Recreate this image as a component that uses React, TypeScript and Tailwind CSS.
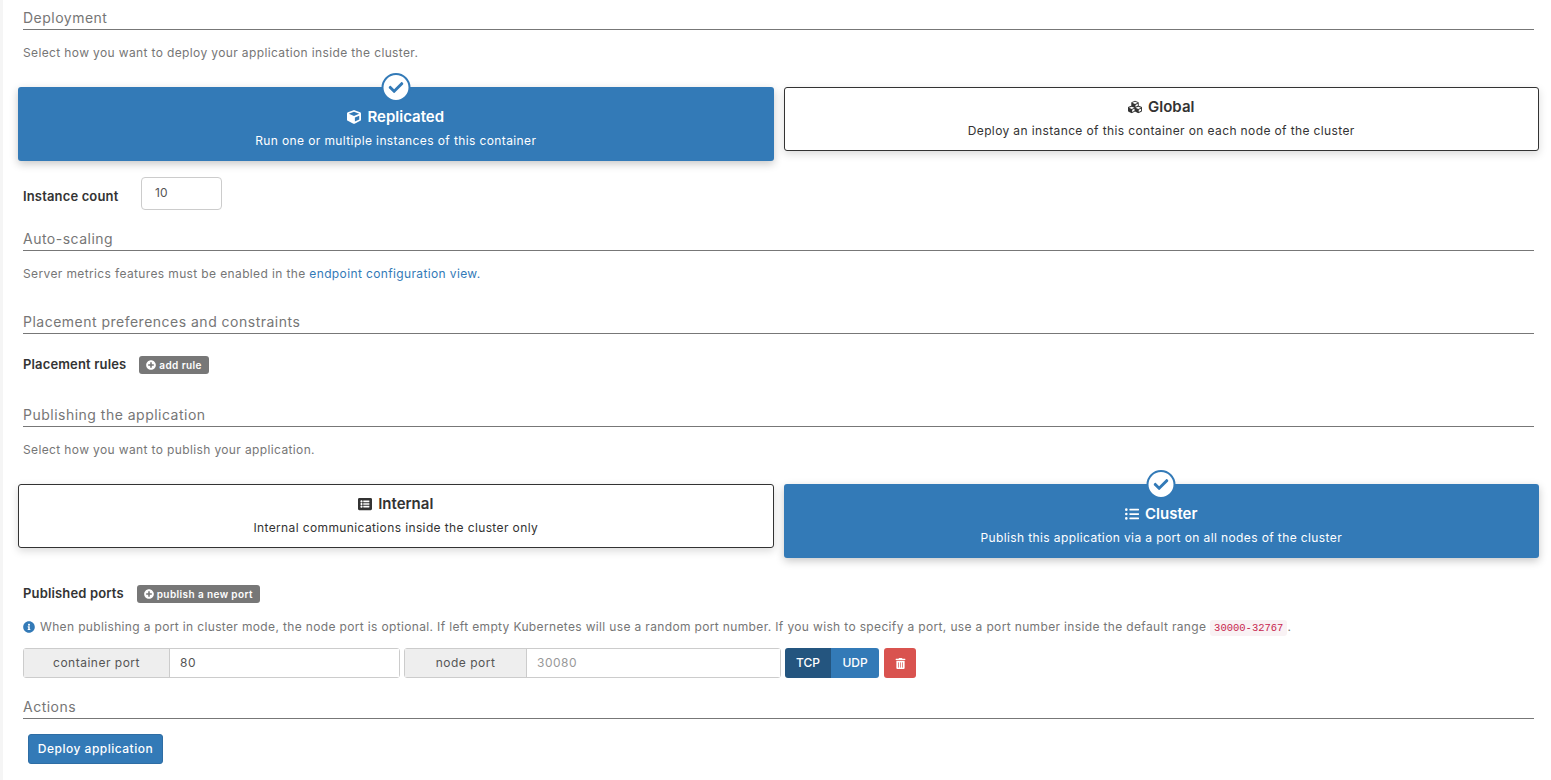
import React from 'react';
import { FaCheck, FaCube, FaCubes, FaInfoCircle, FaListAlt, FaListUl, FaPlusCircle, FaTrashAlt } from 'react-icons/fa';

function SectionTitle({ children }: { children: React.ReactNode }) {
  return (
    <div className="h-[30px] border-b border-[#777] pt-[8px] text-[14px] leading-[20px] tracking-[0.49px] text-[#767676]">
      {children}
    </div>
  );
}

function Hint({ children }: { children: React.ReactNode }) {
  return <p className="text-[12px] leading-[18px] tracking-[0.37px] text-[#767676]">{children}</p>;
}

function ModeCard({ active, icon, title, text }: { active?: boolean; icon: React.ReactNode; title: string; text: string }) {
  if (active) {
    return (
      <div className="relative flex h-[74px] flex-col items-center rounded-[3px] bg-[#337ab7] pt-[20px] text-white shadow-[0_3px_8px_rgba(0,0,0,0.22)]">
        <div className="absolute -top-[14px] left-1/2 flex h-[29px] w-[29px] -translate-x-1/2 items-center justify-center rounded-full border-[2px] border-[#337ab7] bg-white text-[#337ab7]">
          <FaCheck className="h-[15px] w-[15px]" />
        </div>
        <div className="flex items-center gap-[6px] text-[15px] font-semibold leading-[20px]">
          {icon}
          {title}
        </div>
        <div className="mt-[5px] text-[12px] leading-[18px] tracking-[0.39px]">{text}</div>
      </div>
    );
  }
  return (
    <div className="flex h-[64px] flex-col items-center rounded-[3px] border border-[#333] bg-white pt-[9px] text-[#333] shadow-[0_3px_8px_rgba(0,0,0,0.15)]">
      <div className="flex items-center gap-[6px] text-[15px] font-semibold leading-[20px]">
        {icon}
        {title}
      </div>
      <div className="mt-[5px] text-[12px] leading-[18px] tracking-[0.38px]">{text}</div>
    </div>
  );
}

function Badge({ children }: { children: React.ReactNode }) {
  return (
    <span className="inline-flex h-[18px] items-center gap-[3px] rounded-[3px] bg-[#777] px-[7px] text-[10px] font-semibold tracking-[0.4px] text-white">
      <FaPlusCircle className="h-[10px] w-[10px]" />
      {children}
    </span>
  );
}

function PortField({ label, value, placeholder, labelWidth, width }: { label: string; value?: string; placeholder?: string; labelWidth: string; width: string }) {
  return (
    <div className={`flex h-[30px] ${width} rounded-[3px] border border-[#ccc] text-[12px] tracking-[0.5px]`}>
      <div className={`flex ${labelWidth} items-center justify-center border-r border-[#ccc] bg-[#eee] text-[#555]`}>{label}</div>
      <div className={`flex flex-1 items-center bg-white px-[10px] ${value ? 'text-[#555]' : 'text-[#999]'}`}>{value ?? placeholder}</div>
    </div>
  );
}

export default function App() {
  return (
    <div className="h-[780px] overflow-hidden border-l-[3px] border-[#f5f5f5] bg-white pl-[20px] pr-[17px] font-['Inter','Liberation_Sans',sans-serif] text-[#333]">
      <SectionTitle>Deployment</SectionTitle>
      <div className="mt-[14px]">
        <Hint>Select how you want to deploy your application inside the cluster.</Hint>
      </div>
      <div className="-mx-[5px] mt-[25px] grid h-[74px] grid-cols-2 items-start gap-[10px]">
        <ModeCard active icon={<FaCube className="h-[14px] w-[14px]" />} title="Replicated" text="Run one or multiple instances of this container" />
        <ModeCard icon={<FaCubes className="h-[14px] w-[14px]" />} title="Global" text="Deploy an instance of this container on each node of the cluster" />
      </div>
      <div className="mt-[16px] flex h-[33px] items-center">
        <span className="mt-[6px] w-[118px] text-[13px] font-semibold tracking-[0.15px]">Instance count</span>
        <div className="flex h-[33px] w-[81px] items-center rounded-[4px] border border-[#ccc] px-[13px] pb-[2px] text-[12px] text-[#555]">10</div>
      </div>

      <div className="mt-[11px]">
        <SectionTitle>Auto-scaling</SectionTitle>
      </div>
      <div className="mt-[14px]">
        <Hint>
          Server metrics features must be enabled in the <span className="text-[#337ab7]">endpoint configuration view.</span>
        </Hint>
      </div>

      <div className="mt-[21px]">
        <SectionTitle>Placement preferences and constraints</SectionTitle>
      </div>
      <div className="mt-[21px] flex h-[20px] items-center gap-[13px]">
        <span className="text-[13px] font-semibold tracking-[0.15px]">Placement rules</span>
        <Badge>add rule</Badge>
      </div>

      <div className="mt-[22px]">
        <SectionTitle>Publishing the application</SectionTitle>
      </div>
      <div className="mt-[14px]">
        <Hint>Select how you want to publish your application.</Hint>
      </div>
      <div className="-mx-[5px] mt-[25px] grid h-[74px] grid-cols-2 items-start gap-[10px]">
        <ModeCard icon={<FaListAlt className="h-[14px] w-[14px]" />} title="Internal" text="Internal communications inside the cluster only" />
        <ModeCard active icon={<FaListUl className="h-[14px] w-[14px]" />} title="Cluster" text="Publish this application via a port on all nodes of the cluster" />
      </div>

      <div className="mt-[26px] flex h-[20px] items-center gap-[13px]">
        <span className="text-[13px] font-semibold tracking-[0.15px]">Published ports</span>
        <Badge>publish a new port</Badge>
      </div>
      <div className="mt-[13px] flex h-[20px] items-center gap-[5px] text-[12px] tracking-[0.35px] text-[#767676]">
        <FaInfoCircle className="h-[12px] w-[12px] text-[#337ab7]" />
        <span>
          When publishing a port in cluster mode, the node port is optional. If left empty Kubernetes will use a random port number. If you wish to specify a port, use a port number inside the default range{' '}
          <code className="rounded-[3px] bg-[#f9f2f4] px-[4px] py-[2px] font-['Liberation_Mono',monospace] text-[10.5px] tracking-normal text-[#c7254e]">30000-32767</code>.
        </span>
      </div>
      <div className="mt-[11px] flex h-[30px] items-center gap-[4px]">
        <PortField label="container port" value="80" labelWidth="w-[146px]" width="w-[377px]" />
        <PortField label="node port" placeholder="30080" labelWidth="w-[122px]" width="w-[377px]" />
        <div className="flex h-[30px] overflow-hidden rounded-[3px] text-[12px] font-medium text-white">
          <div className="flex w-[46px] items-center justify-center bg-[#24557f]">TCP</div>
          <div className="flex w-[48px] items-center justify-center bg-[#337ab7]">UDP</div>
        </div>
        <div className="ml-[1px] flex h-[30px] w-[32px] items-center justify-center rounded-[3px] bg-[#d9534f] text-white">
          <FaTrashAlt className="h-[11px] w-[11px]" />
        </div>
      </div>

      <div className="mt-[11px]">
        <SectionTitle>Actions</SectionTitle>
      </div>
      <button className="ml-[5px] mt-[15px] flex h-[30px] w-[135px] items-center justify-center rounded-[3px] border border-[#2e6da4] bg-[#337ab7] text-[12px] font-medium tracking-[0.5px] text-white">
        Deploy application
      </button>
    </div>
  );
}
